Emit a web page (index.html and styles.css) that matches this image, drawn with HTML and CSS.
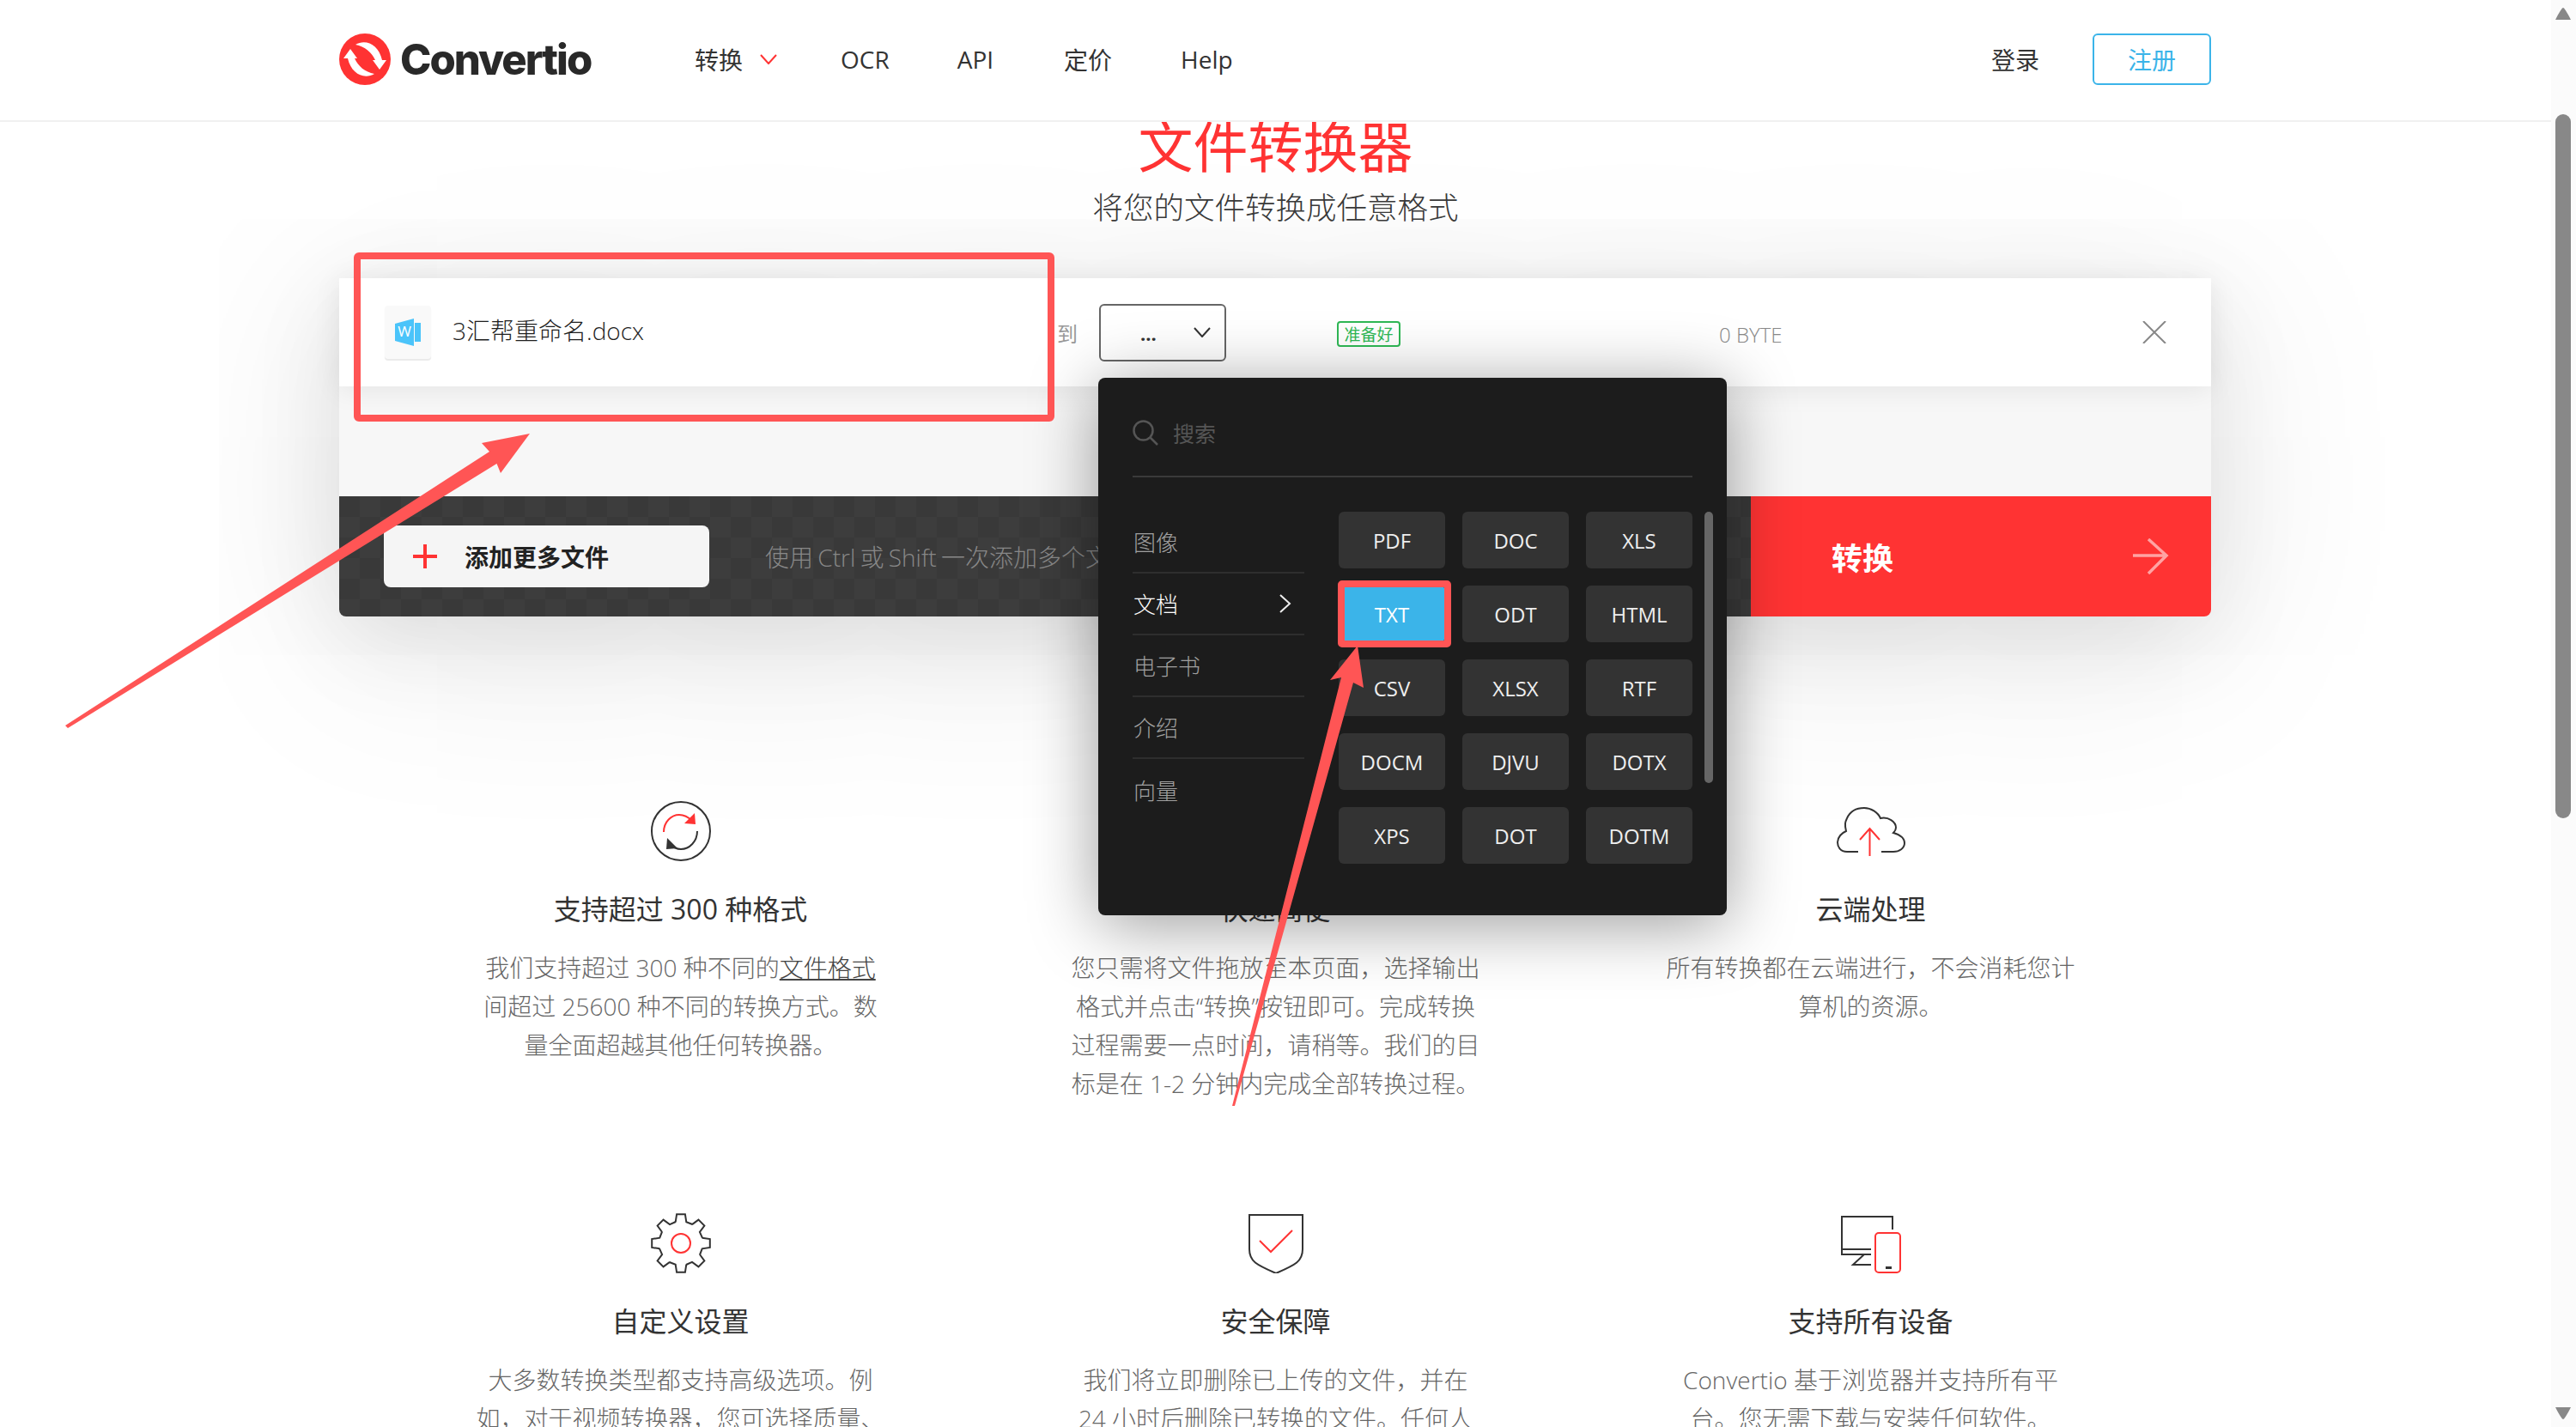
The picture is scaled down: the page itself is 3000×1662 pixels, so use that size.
FILE: index.html
```html
<!DOCTYPE html>
<html lang="zh-CN">
<head>
<title>Convertio</title>
<meta charset="UTF-8">
<link rel="stylesheet" href="styles.css">
</head>
<body>
<div class="app">
  <div class="page">
    <header class="topbar">
      <a class="logo">
        <svg class="logo-mark" viewBox="0 0 60 60" width="60" height="60">
          <circle cx="30" cy="30" r="30" fill="#ff3333"/>
          <path id="logo-arrow" d="M19 13C31 6 46 13 50 31H55L47 42L39 31H42C38 22 30 15 19 13Z" fill="#fff"/>
          <use href="#logo-arrow" transform="rotate(180 30 30)"/>
        </svg>
        <span class="logo-text">Convertio</span>
      </a>
      <nav class="nav">
        <a class="nav-item nav-convert">转换
          <svg class="nav-chevron" viewBox="0 0 20 12" width="20" height="12"><path d="M1 1L10 11L19 1" fill="none" stroke="#ff3333" stroke-width="2"/></svg>
        </a>
        <a class="nav-item nav-ocr">OCR</a>
        <a class="nav-item nav-api">API</a>
        <a class="nav-item nav-price">定价</a>
        <a class="nav-item">Help</a>
      </nav>
      <a class="login">登录</a>
      <a class="signup">注册</a>
    </header>

    <main class="content">
      <h1 class="title">文件转换器</h1>
      <p class="subtitle">将您的文件转换成任意格式</p>

      <section class="converter">
        <div class="file-row">
          <div class="file-icon">
            <svg viewBox="0 0 30 32" width="30" height="32">
              <path d="M0 6L22 0V32L0 26Z" fill="#4bc4fa"/>
              <rect x="23" y="5" width="7" height="22" fill="#4bc4fa"/>
              <text x="11" y="21" class="file-icon-letter">W</text>
            </svg>
          </div>
          <div class="file-name">3汇帮重命名.docx</div>
          <span class="file-to">到</span>
          <div class="format-select">
            <span class="format-dots">...</span>
            <svg viewBox="0 0 20 12" width="20" height="12"><path d="M1 1L10 11L19 1" fill="none" stroke="#333" stroke-width="2"/></svg>
          </div>
          <span class="badge">准备好</span>
          <span class="file-size">0 BYTE</span>
          <svg class="file-close" viewBox="0 0 28 26" width="28" height="26"><path d="M1 0L27 26M27 0L1 26" fill="none" stroke="#888" stroke-width="2"/></svg>
        </div>
        <div class="drop-strip"></div>
        <div class="action-bar">
          <div class="action-left">
            <a class="add-btn">
              <svg viewBox="0 0 28 28" width="28" height="28"><path d="M14 0V28M0 14H28" stroke="#ff3333" stroke-width="4"/></svg>
              添加更多文件
            </a>
            <span class="hint">使用 Ctrl 或 Shift 一次添加多个文件</span>
          </div>
          <a class="convert-btn">转换
            <svg viewBox="0 0 42 42" width="42" height="42"><path d="M0 20H39M18 1L39 20L18 41" fill="none" stroke="#fff" stroke-opacity="0.55" stroke-width="3.500"/></svg>
          </a>
        </div>

        <div class="format-menu">
          <div class="menu-search">
            <svg viewBox="0 0 30 30" width="30" height="30"><circle cx="12.500" cy="12.500" r="11" fill="none" stroke="#555" stroke-width="2.500"/><path d="M20 20L29 29" stroke="#555" stroke-width="2.500"/></svg>
            <span>搜索</span>
          </div>
          <div class="menu-body">
            <ul class="menu-cats">
              <li>图像</li>
              <li class="active">文档
                <svg viewBox="0 0 14 22" width="14" height="22"><path d="M1 1L12 11L1 21" fill="none" stroke="#eee" stroke-width="2"/></svg>
              </li>
              <li>电子书</li>
              <li>介绍</li>
              <li>向量</li>
            </ul>
            <div class="menu-grid">
              <a class="fmt">PDF</a><a class="fmt">DOC</a><a class="fmt">XLS</a>
              <a class="fmt fmt-on">TXT</a><a class="fmt">ODT</a><a class="fmt">HTML</a>
              <a class="fmt">CSV</a><a class="fmt">XLSX</a><a class="fmt">RTF</a>
              <a class="fmt">DOCM</a><a class="fmt">DJVU</a><a class="fmt">DOTX</a>
              <a class="fmt">XPS</a><a class="fmt">DOT</a><a class="fmt">DOTM</a>
            </div>
            <div class="menu-scroll"></div>
          </div>
        </div>
      </section>

      <section class="features">
        <div class="feature">
          <svg class="feature-icon" viewBox="0 0 70 70">
            <circle cx="35" cy="35" r="34" class="ink"/>
            <path d="M15 36C15 24 24 16 33 16C39 16 44 19 48 23" class="red"/>
            <path d="M51 14L52 27L39 26Z" fill="#ff3333"/>
            <path d="M54 35C54 47 45 56 35 56C29 56 25 53 22 50" class="ink"/>
            <path d="M19 43L18 56L31 55Z" fill="#333"/>
          </svg>
          <h3>支持超过 300 种格式</h3>
          <p>我们支持超过 300 种不同的<a class="link">文件格式</a><br>间超过 25600 种不同的转换方式。数<br>量全面超越其他任何转换器。</p>
        </div>
        <div class="feature">
          <div class="feature-icon"></div>
          <h3>快速简便</h3>
          <p>您只需将文件拖放至本页面，选择输出<br>格式并点击“转换”按钮即可。完成转换<br>过程需要一点时间，请稍等。我们的目<br>标是在 1-2 分钟内完成全部转换过程。</p>
        </div>
        <div class="feature">
          <svg class="feature-icon feature-icon-wide" viewBox="0 0 80 70">
            <path d="M25 59H12C4 59 1 53 1 48C1 42 6 37 11 35C9 27 10 24 12 20C16 11 24 8 32 8C40 8 48 13 51 20C60 18 69 24 69 31C69 33 68 35 66 37C73 39 79 43 79 49C79 55 73 59 66 59H52" class="ink"/>
            <path d="M38.500 64V32M27 45L38.500 32L50 45" class="red"/>
          </svg>
          <h3>云端处理</h3>
          <p>所有转换都在云端进行，不会消耗您计<br>算机的资源。</p>
        </div>
        <div class="feature">
          <svg class="feature-icon" viewBox="0 0 70 70">
            <g class="ink">
              <path id="gear-tooth" d="M28.700 10.300L30.100 1.200H39.900L41.300 10.300L48.400 13"/>
              <use href="#gear-tooth" transform="rotate(45 35 35)"/>
              <use href="#gear-tooth" transform="rotate(90 35 35)"/>
              <use href="#gear-tooth" transform="rotate(135 35 35)"/>
              <use href="#gear-tooth" transform="rotate(180 35 35)"/>
              <use href="#gear-tooth" transform="rotate(225 35 35)"/>
              <use href="#gear-tooth" transform="rotate(270 35 35)"/>
              <use href="#gear-tooth" transform="rotate(315 35 35)"/>
            </g>
            <circle cx="35" cy="35" r="11" class="red"/>
          </svg>
          <h3>自定义设置</h3>
          <p>大多数转换类型都支持高级选项。例<br>如，对于视频转换器，您可选择质量、</p>
        </div>
        <div class="feature">
          <svg class="feature-icon" viewBox="0 0 70 70">
            <path d="M4 2H66V42C66 56 58 60 35 70C12 60 4 56 4 42Z" class="ink"/>
            <path d="M16 32L29 45L54 20" class="red"/>
          </svg>
          <h3>安全保障</h3>
          <p>我们将立即删除已上传的文件，并在<br>24 小时后删除已转换的文件。任何人</p>
        </div>
        <div class="feature">
          <svg class="feature-icon" viewBox="0 0 70 70">
            <path d="M60 19V4H1V48H35M1 42H35M27 48L14 60H35" class="ink"/>
            <rect x="40" y="23" width="29" height="46" rx="4" class="red"/>
            <rect x="52" y="62" width="7" height="3" fill="#333"/>
          </svg>
          <h3>支持所有设备</h3>
          <p>Convertio 基于浏览器并支持所有平<br>台。您无需下载与安装任何软件。</p>
        </div>
      </section>
    </main>
  </div>

  <aside class="scrollbar">
    <svg class="scroll-arrow" viewBox="0 0 18 14" width="18" height="14"><path d="M9 0C11 0 18 14 18 14H0C0 14 7 0 9 0Z" fill="#888"/></svg>
    <span class="scroll-thumb"></span>
    <svg class="scroll-arrow scroll-down" viewBox="0 0 18 14" width="18" height="14"><path d="M0 0H18C18 0 11 14 9 14C7 14 0 0 0 0Z" fill="#888"/></svg>
  </aside>

  <!-- red marks drawn on top of the screenshot -->
  <svg class="marks" viewBox="0 0 3000 1662" width="3000" height="1662">
    <rect x="416" y="298" width="808" height="189" rx="2"/>
    <rect x="1562" y="680" width="124" height="70" rx="1"/>
    <polygon points="76,845 570,526 561,516 617,505 583,551 578.500,540 79,848"/>
    <polygon points="1435,1288 1562,789 1549,792 1581,752 1588,801 1576,795 1438,1288"/>
  </svg>
</div>
</body>
</html>
```

FILE: styles.css
```css
html, body {
    margin: 0;
    padding: 0;
    background-color: #fff;
}
body {
    font-family: "Open Sans", "Noto Sans CJK SC", sans-serif;
    font-size: 28px;
    color: #333;
}
.app {
    position: relative;
    display: flex;
    width: 3000px;
    height: 1662px;
    overflow: hidden;
}
.page {
    width: 2971px;
    flex: none;
}

/* header */
.topbar {
    position: relative;
    z-index: 3;
    display: flex;
    align-items: center;
    box-sizing: border-box;
    height: 142px;
    padding: 0 396px 2px 395px;
    background-color: #fff;
    border-bottom: 2px solid #f0f0f0;
}
.logo {
    display: flex;
    align-items: center;
    width: 414px;
    flex: none;
}
.logo-text {
    margin-left: 11px;
    font-family: "Inter", sans-serif;
    font-size: 49px;
    font-weight: 800;
    letter-spacing: -2px;
    color: #292929;
}
.nav {
    display: flex;
    align-items: center;
    flex: 1;
}
.nav-item {
    margin-right: 81px;
    color: #333;
}
.nav-convert {
    display: flex;
    align-items: center;
    margin-right: 74px;
}
.nav-chevron {
    margin-left: 20px;
}
.nav-ocr {
    margin-right: 79px;
}
.nav-api {
    margin-right: 82px;
}
.nav-price {
    margin-right: 80px;
}
.login {
    margin-right: 62px;
}
.signup {
    box-sizing: border-box;
    display: flex;
    align-items: center;
    justify-content: center;
    width: 138px;
    height: 60px;
    border: 2px solid #3bb4e9;
    border-radius: 6px;
    color: #3bb4e9;
}

/* hero */
.title {
    margin: -3px 0 0;
    font-size: 64px;
    line-height: 64px;
    font-weight: 400;
    text-align: center;
    color: #ff3333;
}
.subtitle {
    margin: 13px 0 0;
    font-size: 35.500px;
    line-height: 50px;
    font-weight: 300;
    text-align: center;
    color: #3a3a3a;
}

/* converter box */
.converter {
    position: relative;
    width: 2180px;
    margin: 58px 0 0 395px;
    box-shadow: 0 30px 110px rgba(0, 0, 0, 0.09), 0 30px 240px rgba(0, 0, 0, 0.11);
    border-radius: 0 0 8px 8px;
}
.file-row {
    position: relative;
    z-index: 1;
    display: flex;
    align-items: center;
    height: 126px;
    padding-left: 53px;
    background-color: #fff;
    box-shadow: 0 4px 30px rgba(0, 0, 0, 0.08);
}
.file-icon {
    display: flex;
    align-items: center;
    justify-content: center;
    width: 54px;
    height: 62px;
    flex: none;
    background-color: #f9f9f9;
    border-radius: 4px;
    box-shadow: 0 2px 1px #eaeaea;
}
.file-icon-letter {
    font-size: 17px;
    fill: #fff;
    text-anchor: middle;
}
.file-name {
    width: 704px;
    margin-left: 25px;
    margin-top: -6px;
    flex: none;
    color: #1f1f1f;
    font-weight: 300;
}
.file-to {
    width: 49px;
    flex: none;
    font-size: 24px;
    color: #999;
}
.format-select {
    box-sizing: border-box;
    display: flex;
    align-items: center;
    justify-content: space-between;
    width: 148px;
    height: 67px;
    padding: 0 16px 0 46px;
    flex: none;
    border: 2px solid #666;
    border-radius: 6px;
}
.format-dots {
    margin-top: 2px;
    font-size: 22px;
    font-weight: 700;
}
.badge {
    box-sizing: border-box;
    display: flex;
    align-items: center;
    justify-content: center;
    width: 74px;
    height: 30px;
    margin-left: 129px;
    margin-top: 4px;
    flex: none;
    border: 2px solid #2fb855;
    border-radius: 4px;
    font-size: 19px;
    color: #2fb855;
}
.file-size {
    width: 493px;
    margin-left: 371px;
    margin-top: 4px;
    flex: none;
    font-size: 24px;
    font-weight: 300;
    color: #888;
}
.file-close {
    flex: none;
}
.drop-strip {
    height: 128px;
    background-color: #f7f7f7;
}
.action-bar {
    display: flex;
    height: 140px;
}
.action-left {
    display: flex;
    align-items: center;
    flex: 1;
    padding-left: 52px;
    overflow: hidden;
    background-color: #3a3a3a;
    background-image: conic-gradient(#3d3d3d 25%, #393939 0 50%, #3d3d3d 0 75%, #393939 0);
    background-size: 48px 48px;
    border-radius: 0 0 0 8px;
}
.add-btn {
    box-sizing: border-box;
    display: flex;
    align-items: center;
    width: 379px;
    height: 72px;
    padding-left: 34px;
    flex: none;
    gap: 32px;
    background-color: #f5f5f5;
    border-radius: 8px;
    font-weight: 700;
    color: #222;
}
.hint {
    margin-left: 65px;
    white-space: nowrap;
    word-spacing: -2px;
    font-weight: 300;
    color: #888;
}
.convert-btn {
    box-sizing: border-box;
    display: flex;
    align-items: center;
    justify-content: space-between;
    width: 536px;
    padding: 0 49px 0 94px;
    flex: none;
    background-color: #ff3333;
    border-radius: 0 0 8px 0;
    font-size: 36px;
    font-weight: 700;
    color: #fff;
}

/* format dropdown */
.format-menu {
    position: absolute;
    z-index: 2;
    top: 116px;
    left: 884px;
    box-sizing: border-box;
    width: 732px;
    height: 626px;
    padding: 0 40px;
    background-color: #1c1c1c;
    border-radius: 8px;
    box-shadow: 0 10px 80px rgba(0, 0, 0, 0.4);
}
.menu-search {
    display: flex;
    align-items: center;
    box-sizing: border-box;
    height: 116px;
    padding-top: 14px;
    gap: 17px;
    border-bottom: 2px solid #3a3a3a;
    font-size: 25px;
    color: #555;
}
.menu-body {
    position: relative;
    display: flex;
    padding-top: 40px;
}
.menu-cats {
    width: 200px;
    margin: 0;
    padding: 0;
    flex: none;
    list-style: none;
    font-size: 26px;
    font-weight: 300;
    color: #a0a0a0;
}
.menu-cats li {
    display: flex;
    align-items: center;
    justify-content: space-between;
    box-sizing: border-box;
    height: 72px;
    padding: 0 15px 0 1px;
    border-bottom: 2px solid #2e2e2e;
}
.menu-cats li:last-child {
    border-bottom: none;
}
.menu-cats .active {
    color: #fff;
}
.menu-grid {
    display: grid;
    grid-template-columns: repeat(3, 124px);
    grid-auto-rows: 66px;
    gap: 20px;
    margin-left: 40px;
}
.fmt {
    display: flex;
    align-items: center;
    justify-content: center;
    background-color: #333;
    border-radius: 6px;
    font-size: 24px;
    color: #eee;
}
.fmt-on {
    background-color: #3bb4e9;
    color: #fff;
}
.menu-scroll {
    position: absolute;
    top: 40px;
    right: -24px;
    width: 10px;
    height: 316px;
    background-color: #666;
    border-radius: 5px;
}

/* features */
.features {
    display: grid;
    grid-template-columns: repeat(3, 693px);
    grid-auto-rows: 480px;
    justify-content: center;
    margin-top: 215px;
}
.feature {
    text-align: center;
}
.feature-icon {
    display: block;
    width: 70px;
    height: 70px;
    margin: 0 auto;
}
.feature-icon-wide {
    width: 80px;
}
.feature h3 {
    margin: 34px 0 0;
    font-size: 32px;
    line-height: 44px;
    font-weight: 400;
    color: #333;
}
.feature p {
    margin: 24px 0 0;
    line-height: 45px;
    font-weight: 300;
    color: #666;
}
.link {
    color: #444;
    text-decoration: underline;
}
.ink {
    fill: none;
    stroke: #333;
    stroke-width: 2;
}
.red {
    fill: none;
    stroke: #ff3333;
    stroke-width: 2;
}

/* page scrollbar */
.scrollbar {
    position: relative;
    z-index: 3;
    display: flex;
    flex-direction: column;
    align-items: center;
    box-sizing: border-box;
    width: 29px;
    padding: 9px 1px 0 0;
    flex: none;
    background-color: #fbfbfb;
}
.scroll-arrow {
    flex: none;
}
.scroll-down {
    margin-top: 686px;
}
.scroll-thumb {
    width: 18px;
    height: 820px;
    margin-top: 110px;
    flex: none;
    background-color: #888;
    border-radius: 9px;
}

/* annotations */
.marks {
    position: absolute;
    z-index: 4;
    top: 0;
    left: 0;
    pointer-events: none;
}
.marks rect {
    fill: none;
    stroke: #ff5555;
    stroke-width: 8;
}
.marks polygon {
    fill: #ff5555;
}
```
